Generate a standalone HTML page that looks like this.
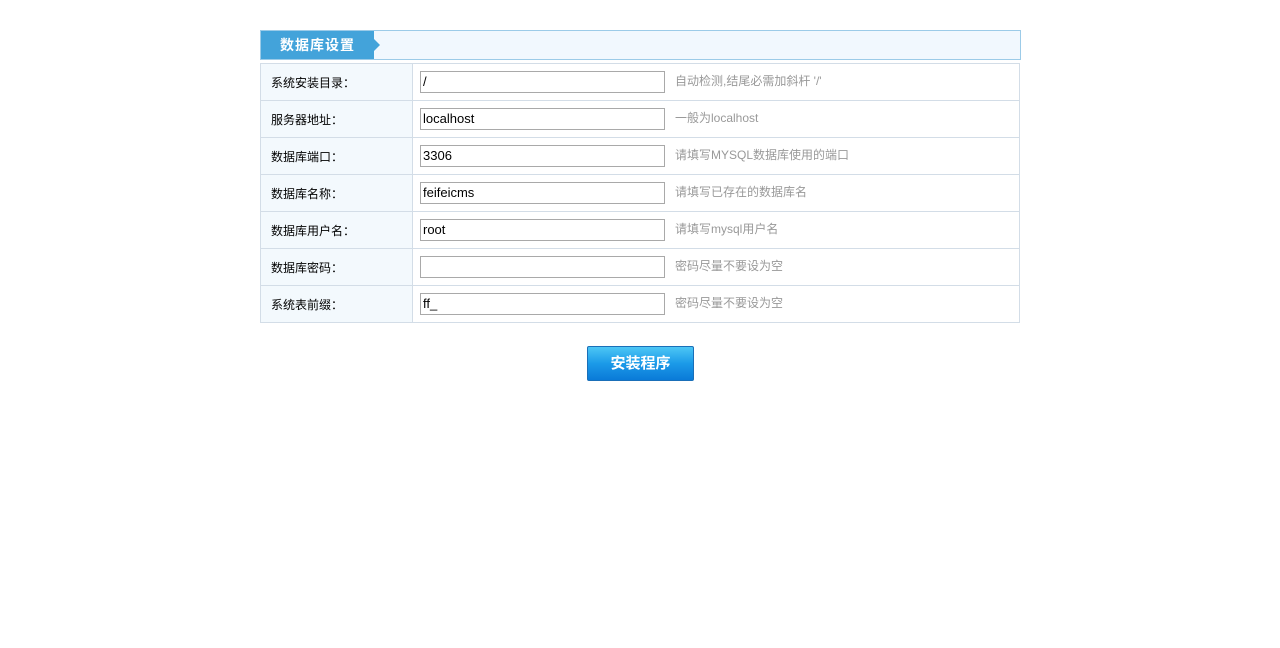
<!DOCTYPE html>
<html><head><meta charset="utf-8"><style>
body{margin:0;background:#fff;font-family:"Liberation Sans","Noto Sans CJK SC",sans-serif;font-size:12px;}
.hd{position:absolute;left:260px;top:30px;width:759px;height:28px;border:1px solid #9ccbe8;background:#f1f8fe;}
.tab{position:absolute;left:0;top:0;width:113px;height:28px;background:#43a3da;color:#fff;font-weight:bold;font-size:14px;line-height:28px;padding-left:19px;box-sizing:border-box;letter-spacing:1px;}
.tab:after{content:"";position:absolute;right:-6px;top:8px;border-left:6px solid #43a3da;border-top:6px solid transparent;border-bottom:6px solid transparent;}
table{position:absolute;left:260px;top:63px;border-collapse:collapse;width:760px;}
td{border:1px solid #d3dde7;height:36px;padding:0;}
td.l{width:141px;background:#f3f9fd;padding-left:10px;color:#000;}
td.r{padding-left:7px;color:#999;}
.in{display:inline-block;vertical-align:middle;width:241px;height:20px;border:1px solid #a9a9a9;line-height:20px;font-size:13px;color:#000;padding-left:2px;box-sizing:content-box;margin-right:10px;}
.btn{position:absolute;left:587px;top:346px;width:105px;height:33px;border:1px solid #1a6fb8;border-radius:2px;background:linear-gradient(#4cc6f5,#1b9ae8 50%,#0a7ad8);color:#fff;font-weight:bold;font-size:15px;text-align:center;line-height:33px;}
</style></head><body>
<div class="hd"><div class="tab">数据库设置</div></div>
<table>
<tr><td class="l">系统安装目录：</td><td class="r"><span class="in">/</span>自动检测,结尾必需加斜杆 '/'</td></tr>
<tr><td class="l">服务器地址：</td><td class="r"><span class="in">localhost</span>一般为localhost</td></tr>
<tr><td class="l">数据库端口：</td><td class="r"><span class="in">3306</span>请填写MYSQL数据库使用的端口</td></tr>
<tr><td class="l">数据库名称：</td><td class="r"><span class="in">feifeicms</span>请填写已存在的数据库名</td></tr>
<tr><td class="l">数据库用户名：</td><td class="r"><span class="in">root</span>请填写mysql用户名</td></tr>
<tr><td class="l">数据库密码：</td><td class="r"><span class="in"></span>密码尽量不要设为空</td></tr>
<tr><td class="l">系统表前缀：</td><td class="r"><span class="in">ff_</span>密码尽量不要设为空</td></tr>
</table>
<div class="btn">安装程序</div>
</body></html>
